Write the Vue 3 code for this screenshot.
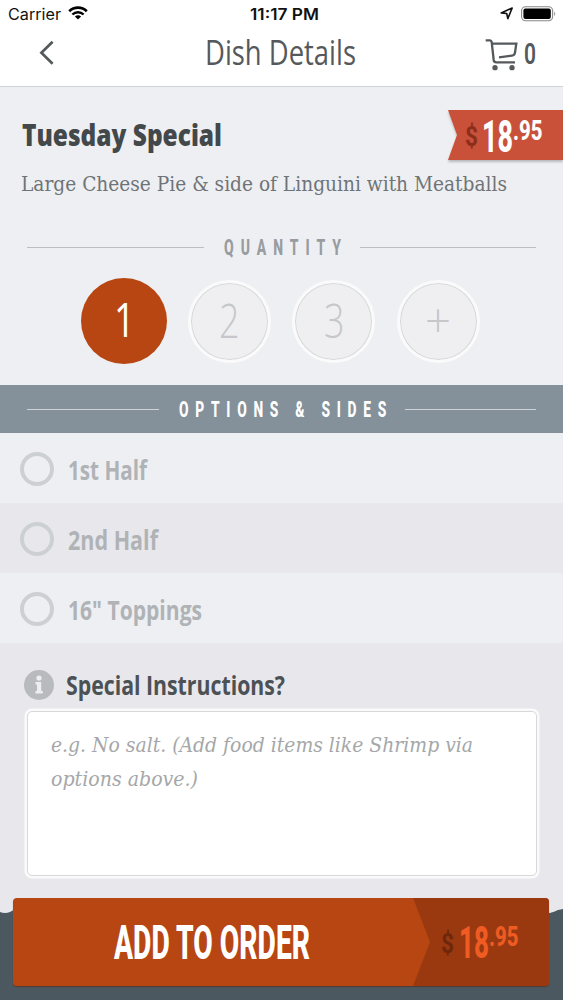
<script setup>
import { h, ref } from 'vue'

// Text set to an exact measure, used for the condensed headings and labels.
const FitText = {
  props: { text: String, w: Number, h: Number, size: Number, base: Number, spacing: { type: Number, default: 0 }, trail: { type: Number, default: 0 } },
  render() {
    return h('svg', { width: this.w + this.trail, height: this.h, style: { display: 'block', flex: 'none', overflow: 'visible' } }, [
      h('text', {
        x: 0, y: this.base, fill: 'currentColor', 'font-size': this.size, 'letter-spacing': this.spacing,
        textLength: this.w + this.trail, lengthAdjust: 'spacingAndGlyphs', 'xml:space': 'preserve'
      }, this.text)
    ])
  }
}

const quantities = [
  { label: '1', w: 21 },
  { label: '2', w: 20.5 },
  { label: '3', w: 20.5 },
  { label: '+', w: 26 }
]
const options = [
  { label: '1st Half', w: 79 },
  { label: '2nd Half', w: 90 },
  { label: '16" Toppings', w: 134 }
]
const quantity = ref('1')
</script>

<template>
  <div class="screen">
    <div class="status">
      <div class="status-left">
        <FitText text="Carrier" :w="53" :h="28" :size="15.5" :base="20" />
        <svg class="wifi" width="20" height="14" viewBox="0 0 20 14">
          <path d="M1.2 5.2A12.6 12.6 0 0 1 18.8 5.2" fill="none" stroke="#000" stroke-width="2.6" />
          <path d="M4.4 8.5A8 8 0 0 1 15.6 8.5" fill="none" stroke="#000" stroke-width="2.4" />
          <path d="M10 13.4L6.9 10.5A4.4 4.4 0 0 1 13.1 10.5Z" />
        </svg>
      </div>
      <FitText class="time" text="11:17 PM" :w="69" :h="28" :size="15.5" :base="20" />
      <div class="status-right">
        <svg width="14" height="14" viewBox="0 0 14 14"><path d="M1.2 6.9L12.2 2L7.8 12.6L6.7 7.5Z" fill="none" stroke="#111" stroke-width="1.6" stroke-linejoin="round" /></svg>
        <svg width="36" height="16" viewBox="0 0 36 16">
          <rect x="0.6" y="0.8" width="31" height="14" rx="4" fill="none" stroke="#888" stroke-width="1.1" />
          <rect x="2.4" y="2.6" width="27.4" height="10.4" rx="2" />
          <path d="M33.3 5.5Q35.2 7.8 33.3 10.1Z" fill="#777" />
        </svg>
      </div>
    </div>

    <header class="nav">
      <svg class="back" width="16" height="26" viewBox="0 0 16 26"><path d="M13.6 1.8L2.4 12.8L13.6 23.8" fill="none" stroke="#55595b" stroke-width="2.7" /></svg>
      <FitText class="title" text="Dish Details" :w="151" :h="58" :size="35" :base="37" />
      <div class="cart">
        <svg width="35" height="33.3" viewBox="610 115 105 100" fill="none" stroke="#55595b" stroke-width="7">
          <path d="M615 122H628Q632 122 633 127L639 181Q640 188 647 188H703M636 132H707L703 159Q702 167 694 168L655 173" />
          <g fill="#55595b" stroke="none"><circle cx="643" cy="204" r="8" /><circle cx="694" cy="204" r="8" /></g>
        </svg>
        <FitText class="count" text="0" :w="12" :h="33" :size="29" :base="26" />
      </div>
    </header>

    <section class="dish">
      <div class="dish-head">
        <FitText class="name" text="Tuesday Special" :w="200" :h="50" :size="30.5" :base="35.5" />
        <div class="ribbon">
          <svg class="ribbon-shape" width="115" height="50"><path d="M0 0H115V50H0L9 25Z" fill="#c9513a" /></svg>
          <svg class="price" width="80" height="50" role="img">
            <text class="cur" x="0" y="36" font-size="28" textLength="13" lengthAdjust="spacingAndGlyphs">$</text>
            <text x="17" y="42" font-size="44" textLength="31" lengthAdjust="spacingAndGlyphs">18</text>
            <text x="48" y="30" font-size="28" textLength="29.5" lengthAdjust="spacingAndGlyphs">.95</text>
          </svg>
        </div>
      </div>
      <FitText class="desc" text="Large Cheese Pie &amp; side of Linguini with Meatballs" :w="486" :h="50" :size="20.8" :base="31" />
    </section>

    <div class="divider quantity-title">
      <i /><FitText text="QUANTITY" :w="117" :trail="7" :h="32" :size="22" :base="24" :spacing="11" /><i />
    </div>
    <div class="quantities">
      <button v-for="q in quantities" :key="q.label" class="qty" :class="{ active: quantity === q.label }" @click="quantity = q.label">
        <FitText :text="q.label" :w="q.w" :h="60" :size="47" :base="46" />
      </button>
    </div>

    <div class="divider options-title">
      <i /><FitText text="OPTIONS &amp; SIDES" :w="207" :trail="7" :h="32" :size="22.5" :base="24" :spacing="11" /><i />
    </div>
    <div class="options">
      <div v-for="o in options" :key="o.label" class="option">
        <span class="radio" />
        <FitText :text="o.label" :w="o.w" :h="34" :size="26" :base="28" />
      </div>
    </div>

    <section class="instructions">
      <div class="inst-head">
        <svg width="30" height="30" viewBox="0 0 30 30">
          <circle cx="15" cy="15" r="15" fill="#b9babe" />
          <g fill="#eeeef1"><circle cx="15" cy="8" r="2.6" /><path d="M11.5 12H17.2V21H18.8V23.6H11.5V21H13V14.5H11.5Z" /></g>
        </svg>
        <FitText text="Special Instructions?" :w="219" :h="34" :size="27" :base="26.5" />
      </div>
      <div class="note">
        <FitText text="e.g. No salt. (Add food items like Shrimp via" :w="422" :h="34" :size="21" :base="27" />
        <FitText text="options above.)" :w="147" :h="34" :size="21" :base="26.5" />
      </div>
    </section>

    <footer class="footer">
      <svg class="wave" width="563" height="8" viewBox="0 0 563 8">
        <path d="M0 4Q5 6 10 4Q14 1 20 1H543Q546 5 550 5Q554 4 558 2L563 1V8H0Z" fill="#4c585f" />
      </svg>
      <button class="add">
        <svg class="add-shape" width="136" height="88"><path d="M0 0H136V88H0L17 44Z" fill="#9a3910" /></svg>
        <span class="add-label"><FitText text="ADD TO ORDER" :w="196" :h="88" :size="49" :base="61" /></span>
        <span class="add-price">
          <svg class="price dark" width="80" height="50" role="img">
            <text class="cur" x="0" y="37" font-size="28" textLength="13" lengthAdjust="spacingAndGlyphs">$</text>
            <text x="18" y="42" font-size="44" textLength="30" lengthAdjust="spacingAndGlyphs">18</text>
            <text x="48" y="30" font-size="28" textLength="29.5" lengthAdjust="spacingAndGlyphs">.95</text>
          </svg>
        </span>
      </button>
    </footer>
  </div>
</template>

<style>
body { background: #4c585f; }
</style>

<style scoped>
.screen { width: 563px; height: 1000px; overflow: hidden; display: flex; flex-direction: column; background: #eeeff2; font-family: "Open Sans", "Noto Sans", sans-serif; }
.status { height: 28px; flex: none; background: #fff; display: grid; grid-template-columns: 250px 70px 1fr; color: #111; font-family: Inter, "Liberation Sans", sans-serif; }
.status-left { display: flex; padding-left: 8px; gap: 7px; }
.wifi { margin-top: 6px; }
.time { font-weight: 600; }
.status-right { display: flex; justify-content: flex-end; gap: 7px; padding: 6px 6px 0 0; }
.nav { height: 58px; flex: none; background: #fff; border-bottom: 1px solid #d0d3d5; display: grid; grid-template-columns: 205px 152px 1fr; color: #56595b; }
.back { margin: 12px 0 0 39px; }
.title { font-weight: 400; }
.cart { display: flex; padding: 10px 0 0 127px; gap: 5px; }
.count { font-family: Roboto, sans-serif; font-weight: 600; }
.dish { flex: none; height: 146px; }
.dish-head { height: 73px; box-sizing: border-box; padding: 23px 0 0 22px; display: flex; justify-content: space-between; color: #43484b; font-weight: 800; }
.ribbon { position: relative; box-sizing: border-box; width: 115px; height: 50px; padding-left: 17px; }
.ribbon-shape { position: absolute; left: 0; top: 0; filter: drop-shadow(0 2px 1px rgba(60, 60, 60, .3)); }
.price { position: relative; display: block; overflow: visible; fill: #fff; font-family: Roboto, "Open Sans", sans-serif; font-weight: 800; }
.price .cur { fill: #8c2e1b; font-weight: 700; }
.desc { margin-left: 21px; color: #6e7477; font-family: "DejaVu Serif Condensed", "DejaVu Serif", serif; }
.divider { flex: none; box-sizing: border-box; display: flex; align-items: center; padding: 0 27px; font-family: Roboto, "Open Sans", sans-serif; font-weight: 800; }
.divider i { flex: 1; height: 1px; background: currentColor; opacity: .6; }
.divider svg { margin: 0 12px 0 20px; }
.quantity-title { height: 28px; color: #989ca0; }
.quantities { flex: none; height: 124px; box-sizing: border-box; display: flex; justify-content: center; gap: 21.5px; padding: 17px 0 0 0; }
.qty { box-sizing: border-box; width: 83px; height: 83px; margin-top: 2px; padding: 0; border: 3px solid #fafafb; border-radius: 50%; background: #efeff2; box-shadow: inset 0 0 0 1px #d6d7da; color: #c5c7ca; display: flex; align-items: center; justify-content: center; font: 300 16px "Open Sans", sans-serif; }
.qty.active { width: 86px; height: 86px; margin: 0 -1px 0 -2px; background: #b84613; border: 0; box-shadow: none; color: #fff; font-weight: 500; }
.options-title { height: 48px; background: #84919b; color: #fff; }
.option { height: 70px; box-sizing: border-box; display: flex; align-items: center; gap: 14px; padding: 2px 0 0 20px; color: #b0b3b6; font-weight: 700; }
.option:nth-child(even) { background: #e8e8ec; }
.radio { box-sizing: border-box; width: 34px; height: 34px; border: 4px solid #cdd0d2; border-radius: 50%; }
.instructions { flex: 1; background: #e8e8ec; }
.inst-head { display: flex; align-items: center; height: 34px; gap: 12px; padding: 25px 0 0 24px; color: #4c5155; font-weight: 700; }
.note { box-sizing: border-box; width: 510px; height: 165px; margin: 9px 0 0 27px; padding: 13px 0 0 23px; background: #fff; border: 1px solid #d7d8db; border-radius: 5px; box-shadow: 0 0 0 2.5px #fafafb; color: #a5a7a9; font-family: "DejaVu Serif Condensed", "DejaVu Serif", serif; font-style: italic; }
.footer { position: relative; flex: none; height: 102px; background: linear-gradient(#e8e8ec 17px, #4c585f 17px); padding: 0 0 0 13px; box-sizing: border-box; }
.wave { position: absolute; left: 0; top: 10px; }
.add { position: relative; width: 536px; height: 88px; padding: 0; border: 0; border-radius: 4px; overflow: hidden; display: flex; background: #b84613; color: #fff; font-family: Roboto, "Open Sans", sans-serif; box-shadow: 0 1px 1px rgba(90, 30, 10, .5); }
.add-shape { position: absolute; left: 400px; top: 0; }
.add-label { flex: none; width: 400px; box-sizing: border-box; padding-left: 101px; font-weight: 800; }
.add-price { flex: 1; height: 88px; box-sizing: border-box; padding: 18px 0 0 28px; }
.dark { fill: #f05b23; }
.dark .cur { fill: #6e270a; }
</style>
